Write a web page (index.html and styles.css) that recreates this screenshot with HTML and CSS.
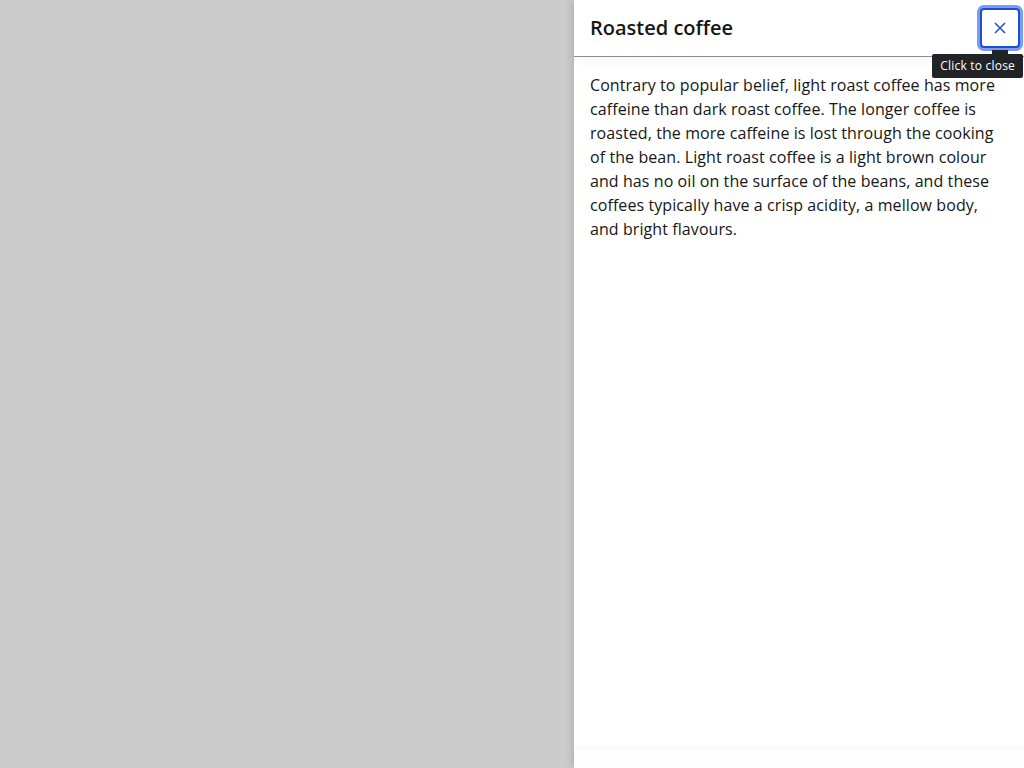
FILE: index.html
```html
<!DOCTYPE html>
<html lang="en">
<head>
<meta charset="utf-8">
<title>Roasted coffee</title>
<link rel="stylesheet" href="styles.css">
</head>
<body>
<div class="backdrop"></div>
<aside class="drawer">
  <header class="drawer-header">
    <h2 class="drawer-title">Roasted coffee</h2>
    <div class="close-wrap">
      <button class="close-btn" aria-label="Close">
        <svg width="12" height="12" viewBox="0 0 12 12" aria-hidden="true"><path d="M1 1 L11 11 M11 1 L1 11" stroke="#1b4fd6" stroke-width="1.5" fill="none"/></svg>
      </button>
      <div class="tooltip">Click to close</div>
    </div>
  </header>
  <div class="drawer-body">
    <p class="drawer-text">Contrary to popular belief, light roast coffee has more caffeine than dark roast coffee. The longer coffee is roasted, the more caffeine is lost through the cooking of the bean. Light roast coffee is a light brown colour and has no oil on the surface of the beans, and these coffees typically have a crisp acidity, a mellow body, and bright flavours.</p>
  </div>
  <footer class="drawer-footer"></footer>
</aside>
</body>
</html>
```
FILE: styles.css
```css
html, body {
  margin: 0;
  height: 100%;
}
body {
  background: #cccccc;
  font-family: "Open Sans", "Noto Sans", sans-serif;
  color: #161616;
  display: flex;
  overflow: hidden;
}
.backdrop {
  flex: 1;
}
.drawer {
  width: 450px;
  height: 768px;
  background: #ffffff;
  display: flex;
  flex-direction: column;
  box-shadow: -2px 0 8px rgba(0, 0, 0, 0.12);
  position: relative;
}
.drawer-header {
  height: 57px;
  box-sizing: border-box;
  border-bottom: 1px solid #8d8d9a;
  display: flex;
  align-items: center;
  justify-content: space-between;
  padding: 0 4px 1px 16px;
  box-shadow: 0 4px 14px rgba(0, 0, 0, 0.04);
  position: relative;
  z-index: 1;
}
.drawer-title {
  margin: 0;
  font-size: 20px;
  font-weight: 600;
  color: #161616;
}
.close-wrap {
  position: relative;
  width: 40px;
  height: 40px;
}
.close-btn {
  width: 40px;
  height: 40px;
  box-sizing: border-box;
  border: 2px solid #1b4fd6;
  border-radius: 4px;
  background: #ffffff;
  display: flex;
  align-items: center;
  justify-content: center;
  padding: 0;
  box-shadow: 0 0 0 3px #7b9cf2;
  cursor: pointer;
}
.tooltip {
  position: absolute;
  top: 46px;
  right: -3px;
  background: #222326;
  color: #ffffff;
  font-size: 12px;
  line-height: 16px;
  letter-spacing: 0.2px;
  padding: 4px 8px;
  border-radius: 2px;
  white-space: nowrap;
}
.tooltip::before {
  content: "";
  position: absolute;
  top: -4px;
  right: 15px;
  width: 16px;
  height: 4px;
  background: #222326;
}
.drawer-body {
  flex: 1;
  padding: 16px;
  overflow: hidden;
}
.drawer-text {
  margin: 0;
  font-size: 16px;
  line-height: 24px;
  letter-spacing: 0.08px;
  color: #161616;
}
.drawer-footer {
  height: 18px;
  background: #fdfdfd;
  box-shadow: 0 -2px 6px rgba(0, 0, 0, 0.04);
}
```
